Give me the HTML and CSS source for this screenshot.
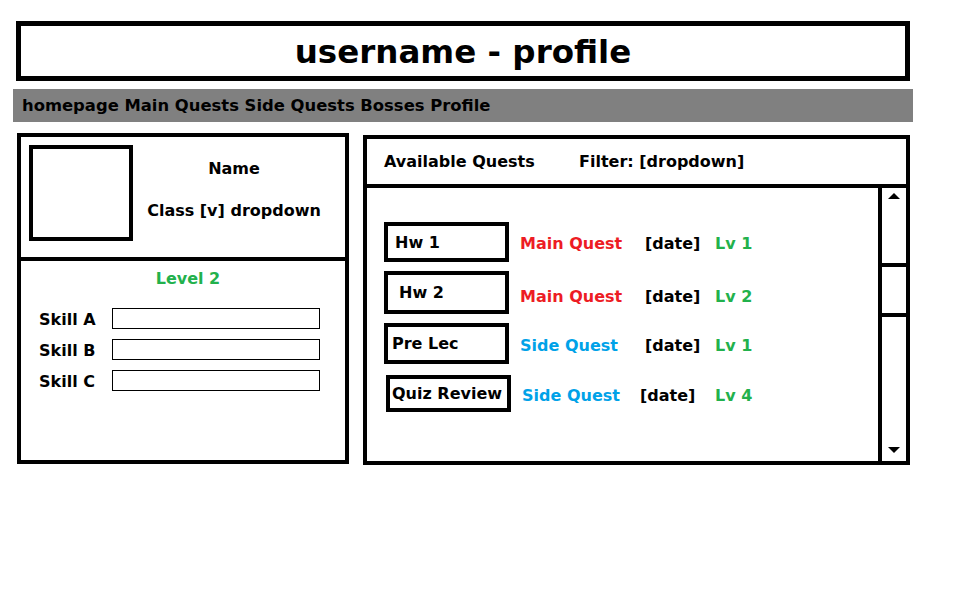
FILE: index.html
```html
<!DOCTYPE html>
<html>
<head>
<meta charset="utf-8">
<link rel="stylesheet" href="styles.css">
</head>
<body>
<div class="page">
  <header class="title-box"><h1 class="title">username - profile</h1></header>
  <nav class="nav">homepage Main Quests Side Quests Bosses Profile</nav>
  <div class="main">
    <section class="profile">
      <div class="profile-top">
        <div class="avatar"></div>
        <div class="info">
          <div class="name">Name</div>
          <div class="class">Class [v] dropdown</div>
        </div>
      </div>
      <div class="profile-bottom">
        <div class="level">Level 2</div>
        <div class="skills">
          <div class="skill"><span class="skill-label">Skill A</span><span class="skill-bar"></span></div>
          <div class="skill"><span class="skill-label">Skill B</span><span class="skill-bar"></span></div>
          <div class="skill"><span class="skill-label">Skill C</span><span class="skill-bar"></span></div>
        </div>
      </div>
    </section>
    <section class="quests">
      <div class="quests-head">
        <span class="avail">Available Quests</span>
        <span class="filter">Filter: [dropdown]</span>
      </div>
      <div class="quests-body">
        <div class="quest-list">
          <div class="quest q1"><span class="qname">Hw 1</span><span class="qtype main-q">Main Quest</span><span class="qdate">[date]</span><span class="qlv">Lv 1</span></div>
          <div class="quest q2"><span class="qname">Hw 2</span><span class="qtype main-q">Main Quest</span><span class="qdate">[date]</span><span class="qlv">Lv 2</span></div>
          <div class="quest q3"><span class="qname">Pre Lec</span><span class="qtype side-q">Side Quest</span><span class="qdate">[date]</span><span class="qlv">Lv 1</span></div>
          <div class="quest q4"><span class="qname">Quiz Review</span><span class="qtype side-q">Side Quest</span><span class="qdate">[date]</span><span class="qlv">Lv 4</span></div>
        </div>
        <div class="scrollbar">
          <div class="track-top"><span class="arrow-up"></span></div>
          <div class="thumb"></div>
          <div class="track-bottom"><span class="arrow-down"></span></div>
        </div>
      </div>
    </section>
  </div>
</div>
</body>
</html>
```
FILE: styles.css
```css
* { box-sizing: border-box; }
html, body { margin: 0; padding: 0; background: #fff; }
body {
  font-family: "Comic Sans MS", "DejaVu Sans", sans-serif;
  font-weight: bold;
  color: #000;
  width: 963px;
  height: 593px;
}
.page { padding-top: 21px; }
.title-box {
  margin-left: 16px;
  width: 894px;
  height: 60px;
  border: 5px solid #000;
  display: flex;
  align-items: center;
  justify-content: center;
  padding-top: 3px;
}
.title {
  margin: 0;
  font-size: 32.5px;
  font-weight: bold;
  line-height: 1;
}
.nav {
  margin-top: 8px;
  margin-left: 13px;
  width: 900px;
  height: 33px;
  background: #808080;
  padding-left: 9px;
  font-size: 16.4px;
  line-height: 33px;
}
.main {
  margin-top: 11px;
  display: flex;
  align-items: flex-start;
}
.profile {
  margin-left: 17px;
  width: 332px;
  height: 331px;
  border: 4px solid #000;
}
.profile-top {
  height: 124px;
  border-bottom: 4px solid #000;
  display: flex;
  padding: 8px 0 0 8px;
}
.avatar {
  width: 104px;
  height: 96px;
  border: 4px solid #000;
}
.info {
  flex: 1;
  text-align: center;
  font-size: 16px;
  padding-top: 13px;
  padding-right: 10px;
}
.name { line-height: 22px; }
.class { margin-top: 20px; line-height: 22px; }
.profile-bottom { padding-top: 8px; }
.level {
  color: #22b14c;
  text-align: center;
  font-size: 16px;
  line-height: 20px;
  padding-left: 10px;
}
.skills { margin-top: 19px; padding-left: 18px; }
.skill {
  display: flex;
  align-items: center;
  height: 21px;
  margin-bottom: 10px;
  font-size: 16px;
}
.skill-label { width: 73px; padding-top: 2px; }
.skill-bar {
  width: 208px;
  height: 21px;
  border: 1px solid #000;
}
.quests {
  margin-left: 14px;
  margin-top: 2px;
  width: 547px;
  height: 330px;
  border: 4px solid #000;
}
.quests-head {
  height: 49px;
  border-bottom: 4px solid #000;
  display: flex;
  align-items: center;
  padding-left: 17px;
  font-size: 16px;
}
.avail { width: 195px; }
.quests-body {
  display: flex;
  height: 273px;
}
.quest-list {
  flex: 1;
  padding: 34px 0 0 17px;
}
.quest {
  display: grid;
  grid-template-columns: 125px 136px 70px auto;
  align-items: center;
  height: 41px;
  margin-bottom: 11px;
  font-size: 16px;
}
.q1 { height: 40px; margin-bottom: 9px; }
.q2 { height: 43px; margin-bottom: 9px; }
.q3 { height: 41px; margin-bottom: 11px; }
.q4 { height: 37px; padding-left: 2px; grid-template-columns: 125px 129px 75px auto; }
.qname {
  height: 100%;
  width: 125px;
  border: 4px solid #000;
  display: flex;
  align-items: center;
  padding-left: 7px;
  white-space: nowrap;
}
.q2 .qname { padding-left: 11px; }
.q3 .qname { padding-left: 4px; }
.q4 .qname { padding-left: 2px; }
.qtype, .qdate, .qlv { padding-top: 3px; }
.q2 .qtype, .q2 .qdate, .q2 .qlv { padding-top: 8px; }
.qtype { padding-left: 11px; }
.main-q { color: #ed1c24; }
.side-q { color: #00a2e8; }
.qlv { color: #22b14c; }
.scrollbar {
  width: 28px;
  border-left: 4px solid #000;
  display: flex;
  flex-direction: column;
}
.track-top {
  height: 79px;
  border-bottom: 4px solid #000;
  display: flex;
  justify-content: center;
  padding-top: 5px;
}
.thumb {
  height: 50px;
  border-bottom: 4px solid #000;
}
.track-bottom {
  flex: 1;
  display: flex;
  justify-content: center;
  align-items: flex-end;
  padding-bottom: 8px;
}
.arrow-up {
  width: 0; height: 0;
  border-left: 6px solid transparent;
  border-right: 6px solid transparent;
  border-bottom: 6px solid #000;
}
.arrow-down {
  width: 0; height: 0;
  border-left: 6px solid transparent;
  border-right: 6px solid transparent;
  border-top: 6px solid #000;
}
```
